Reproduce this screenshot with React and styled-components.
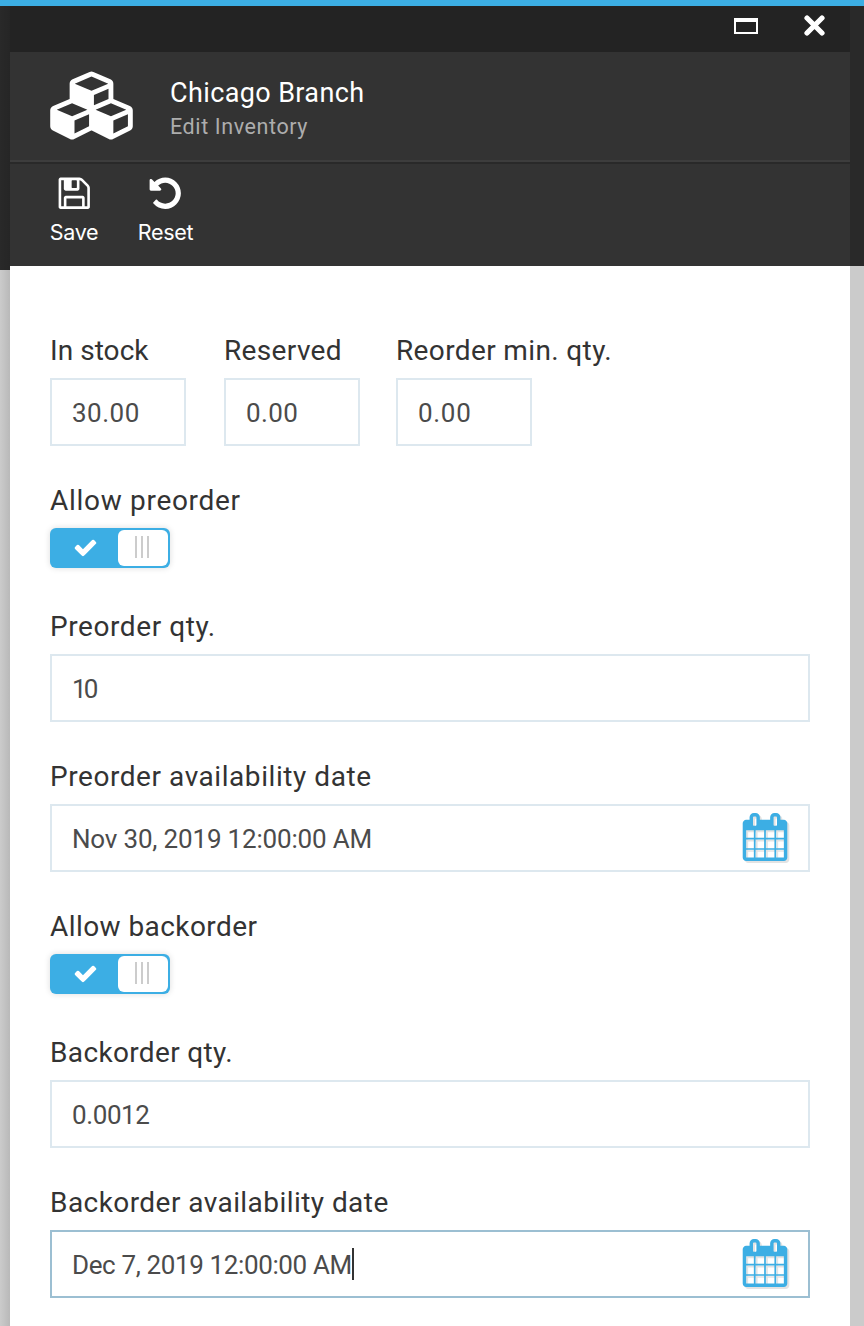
import React from "react";
import styled, { createGlobalStyle } from "styled-components";

const GlobalStyle = createGlobalStyle`
  * { box-sizing: border-box; }
  body { margin: 0; background: #fff; }
`;

const uiFont = `Roboto, "Open Sans", sans-serif`;
const accent = "#3caee4";

const Page = styled.div`
  width: 864px;
  height: 1326px;
  overflow: hidden;
  display: flex;
  flex-direction: column;
  font-family: ${uiFont};
`;
const TopBar = styled.div`
  height: 6px;
  flex: none;
  background: ${accent};
`;
const Workspace = styled.div`
  flex: 1;
  display: flex;
`;
const Rail = styled.div`
  width: ${(p) => p.$width}px;
  background: ${(p) => (p.$shaded ? "linear-gradient(to right, transparent, rgba(0,0,0,.09))," : "")}
    linear-gradient(#292929 ${(p) => p.$dark}px, #cbcbcb ${(p) => p.$dark}px);
`;
const Blade = styled.section`
  width: 840px;
  background: #fff;
`;
const TitleBar = styled.div`
  height: 46px;
  padding: 9px 25px 0 0;
  display: flex;
  justify-content: flex-end;
  align-items: flex-start;
  gap: 46px;
  background: #232323;
`;
const MaximizeIcon = styled.span`
  width: 24px;
  height: 16px;
  margin-top: 3px;
  border: 2px solid #fff;
  border-top-width: 4px;
`;
const Header = styled.header`
  height: 110px;
  padding: 20px 40px 0;
  display: flex;
  gap: 37px;
  background: #333;
  border-bottom: 2px solid #3d3d3d;
`;
const Titles = styled.div`
  padding-top: 3px;
`;
const Title = styled.h1`
  margin: 0;
  font-size: 27px;
  line-height: 36px;
  font-weight: 400;
  letter-spacing: ${(p) => p.$track}px;
  color: #fff;
`;
const Subtitle = styled.div`
  font-size: 21.5px;
  line-height: 32px;
  letter-spacing: ${(p) => p.$track}px;
  color: #adadad;
`;
const Toolbar = styled.div`
  height: 104px;
  padding: 11px 40px 0;
  display: flex;
  gap: 40px;
  background: #333;
  border-top: 2px solid #292929;
`;
const ToolButton = styled.button`
  width: ${(p) => p.$width}px;
  padding: 0;
  border: 0;
  background: none;
  color: #fff;
  display: flex;
  flex-direction: column;
  align-items: center;
  font: 400 21.5px/28px Inter, sans-serif;
  letter-spacing: -0.3px;
  gap: 6px;
  white-space: nowrap;
`;
const Form = styled.form`
  padding: 67px 40px 0;
`;
const Row = styled.div`
  display: flex;
`;
const Field = styled.div`
  width: ${(p) => (p.$width ? `${p.$width}px` : "auto")};
  margin-bottom: ${(p) => (p.$toggle ? 41 : 37)}px;
`;
const Label = styled.label`
  display: block;
  height: 36px;
  margin-bottom: 9px;
  font-size: 28px;
  line-height: 36px;
  letter-spacing: ${(p) => p.$track}px;
  color: #333;
  white-space: nowrap;
`;
const InputBox = styled.div`
  width: ${(p) => (p.$small ? "136px" : "100%")};
  height: 68px;
  padding: 0 20px;
  display: flex;
  align-items: center;
  border: 2px solid ${(p) => (p.$focused ? "#9cbfd2" : "#dde8ef")};
  color: #4b4b4b;
`;
const Value = styled.span`
  padding-top: 2px;
  font-size: 26px;
  line-height: 34px;
  letter-spacing: ${(p) => p.$track}px;
  white-space: nowrap;
`;
const Caret = styled.span`
  width: 2px;
  height: 32px;
  background: #333;
`;
const CalendarButton = styled.span`
  display: flex;
  margin-left: auto;
  margin-right: -1px;
  margin-top: -2px;
  svg { filter: drop-shadow(2px 2px 0 #e3e3e3); }
`;
const Switch = styled.div`
  width: 120px;
  height: 40px;
  padding: 2px;
  display: flex;
  align-items: center;
  background: ${accent};
  border-radius: 6px;
  box-shadow: 0 0 6px rgba(0, 0, 0, 0.14);
`;
const SwitchState = styled.span`
  flex: 1;
  display: flex;
  justify-content: center;
  padding-bottom: 2px;
`;
const Thumb = styled.span`
  width: 50px;
  height: 36px;
  padding: 0 2px 2px 0;
  display: flex;
  gap: 4px;
  align-items: center;
  justify-content: center;
  background: #fff;
  border-radius: 6px;
`;
const Grip = styled.i`
  width: 2px;
  height: 22px;
  background: #ccc;
`;

const glyphs = {
  cubes: "M640 1632l384-192v-314l-384 164v342zm-64-454l404-173-404-173-404 173zm1088 454l384-192v-314l-384 164v342zm-64-454l404-173-404-173-404 173zm-448-293l384-165v-266l-384 164v267zm-64-379l441-189-441-189-441 189zm1088 518v416q0 36-19 67t-52 47l-448 224q-25 14-57 14t-57-14l-448-224q-4-2-7-4-2 2-7 4l-448 224q-25 14-57 14t-57-14l-448-224q-33-16-52-47t-19-67v-416q0-38 21.5-70t56.5-48l434-186v-400q0-38 21.5-70t56.5-48l448-192q23-10 50-10t50 10l448 192q35 16 56.5 48t21.5 70v400l434 186q36 16 57 48t21 70z",
  save: "M512 1536h768v-384h-768v384zm896 0h128v-896q0-14-10-38.5t-20-34.5l-281-281q-10-10-34-20t-39-10v416q0 40-28 68t-68 28h-576q-40 0-68-28t-28-68v-416h-128v1280h128v-416q0-40 28-68t68-28h832q40 0 68 28t28 68v416zm-384-928v-320q0-13-9.5-22.5t-22.5-9.5h-192q-13 0-22.5 9.5t-9.5 22.5v320q0 13 9.5 22.5t22.5 9.5h192q13 0 22.5-9.5t9.5-22.5zm640 32v928q0 40-28 68t-68 28h-1344q-40 0-68-28t-28-68v-1344q0-40 28-68t68-28h928q40 0 88 20t76 48l280 280q28 28 48 76t20 88z",
  undo: "M1664 896q0 156-61 298t-164 245-245 164-298 61q-172 0-327-72.5t-264-204.5q-7-10-6.5-22.5t8.5-20.5l137-138q10-9 25-9 16 2 23 12 73 95 179 147t225 52q104 0 198.5-40.5t163.5-109.5 109.5-163.5 40.5-198.5-40.5-198.5-109.5-163.5-163.5-109.5-198.5-40.5q-98 0-188 35.5t-160 101.5l137 138q31 30 14 69-17 40-59 40h-448q-26 0-45-19t-19-45v-448q0-42 40-59 39-17 69 14l130 129q107-101 244.5-156.5t284.5-55.5q156 0 298 61t245 164 164 245 61 298z",
  check: "M1671 566q0 40-28 68l-724 724-136 136q-28 28-68 28t-68-28l-136-136-362-362q-28-28-28-68t28-68l136-136q28-28 68-28t68 28l294 295 656-657q28-28 68-28t68 28l136 136q28 28 28 68z",
  calendar: "M192 1664h288v-288h-288v288zm352 0h320v-288h-320v288zm-352-352h288v-320h-288v320zm352 0h320v-320h-320v320zm-352-384h288v-288h-288v288zm736 736h320v-288h-320v288zm-384-736h320v-288h-320v288zm768 736h288v-288h-288v288zm-384-352h320v-320h-320v320zm-352-864v-288q0-13-9.5-22.5t-22.5-9.5h-64q-13 0-22.5 9.5t-9.5 22.5v288q0 13 9.5 22.5t22.5 9.5h64q13 0 22.5-9.5t9.5-22.5zm736 864h288v-320h-288v320zm-384-384h320v-288h-320v288zm384 0h288v-288h-288v288zm32-480v-288q0-13-9.5-22.5t-22.5-9.5h-64q-13 0-22.5 9.5t-9.5 22.5v288q0 13 9.5 22.5t22.5 9.5h64q13 0 22.5-9.5t9.5-22.5zm384-64v1280q0 52-38 90t-90 38h-1408q-52 0-90-38t-38-90v-1280q0-52 38-90t90-38h128v-96q0-66 47-113t113-47h64q66 0 113 47t47 113v96h384v-96q0-66 47-113t113-47h64q66 0 113 47t47 113v96h128q52 0 90 38t38 90z",
};

function Glyph({ name, width, height = width, box = "0 0 1792 1792", color = "#fff" }) {
  return (
    <svg width={width} height={height} viewBox={box} fill={color} overflow="visible">
      <path d={glyphs[name]} />
    </svg>
  );
}

function CloseIcon() {
  return (
    <svg width="21" height="21" viewBox="0 0 21 21" fill="none" stroke="#fff" strokeWidth="5.2">
      <path d="M3 3l15 15M18 3L3 18" strokeLinecap="round" />
      <path d="M3.4 3.4l14.2 14.2M17.6 3.4L3.4 17.6" strokeLinecap="square" strokeWidth="3.6" />
    </svg>
  );
}

function TextField({ label, track, value, valueTrack, width, small, date, focused }) {
  return (
    <Field $width={width}>
      <Label $track={track}>{label}</Label>
      <InputBox $small={small} $focused={focused}>
        <Value $track={valueTrack}>{value}</Value>
        {focused && <Caret />}
        {date && (
          <CalendarButton>
            <Glyph name="calendar" width={48} color={accent} />
          </CalendarButton>
        )}
      </InputBox>
    </Field>
  );
}

function SwitchField({ label, track }) {
  return (
    <Field $toggle>
      <Label $track={track}>{label}</Label>
      <Switch role="switch" aria-checked="true">
        <SwitchState>
          <Glyph name="check" width={25} />
        </SwitchState>
        <Thumb>
          <Grip />
          <Grip />
          <Grip />
        </Thumb>
      </Switch>
    </Field>
  );
}

export default function App() {
  return (
    <Page>
      <GlobalStyle />
      <TopBar />
      <Workspace>
        <Rail $width={10} $dark={264} $shaded />
        <Blade>
          <TitleBar>
            <MaximizeIcon />
            <CloseIcon />
          </TitleBar>
          <Header>
            <Glyph name="cubes" width={83} height={68} box="0 10 2176 1792" />
            <Titles>
              <Title $track={0.38}>Chicago Branch</Title>
              <Subtitle $track={0.6}>Edit Inventory</Subtitle>
            </Titles>
          </Header>
          <Toolbar>
            <ToolButton $width={48}>
              <Glyph name="save" width={36.5} />
              Save
            </ToolButton>
            <ToolButton $width={55}>
              <Glyph name="undo" width={36.5} />
              Reset
            </ToolButton>
          </Toolbar>
          <Form>
            <Row>
              <TextField label="In stock" track={0.05} value="30.00" valueTrack={0.5} width={174} small />
              <TextField label="Reserved" track={0.35} value="0.00" valueTrack={0.4} width={172} small />
              <TextField label="Reorder min. qty." track={0.37} value="0.00" valueTrack={0.7} small />
            </Row>
            <SwitchField label="Allow preorder" track={0.7} />
            <TextField label="Preorder qty." track={0.58} value="10" valueTrack={-2.8} />
            <TextField label="Preorder availability date" track={0.56} value="Nov 30, 2019 12:00:00 AM" valueTrack={-0.18} date />
            <SwitchField label="Allow backorder" track={0.43} />
            <TextField label="Backorder qty." track={0.35} value="0.0012" valueTrack={-0.4} />
            <TextField label="Backorder availability date" track={0.44} value="Dec 7, 2019 12:00:00 AM" valueTrack={-0.37} date focused />
          </Form>
        </Blade>
        <Rail $width={14} $dark={260} />
      </Workspace>
    </Page>
  );
}
